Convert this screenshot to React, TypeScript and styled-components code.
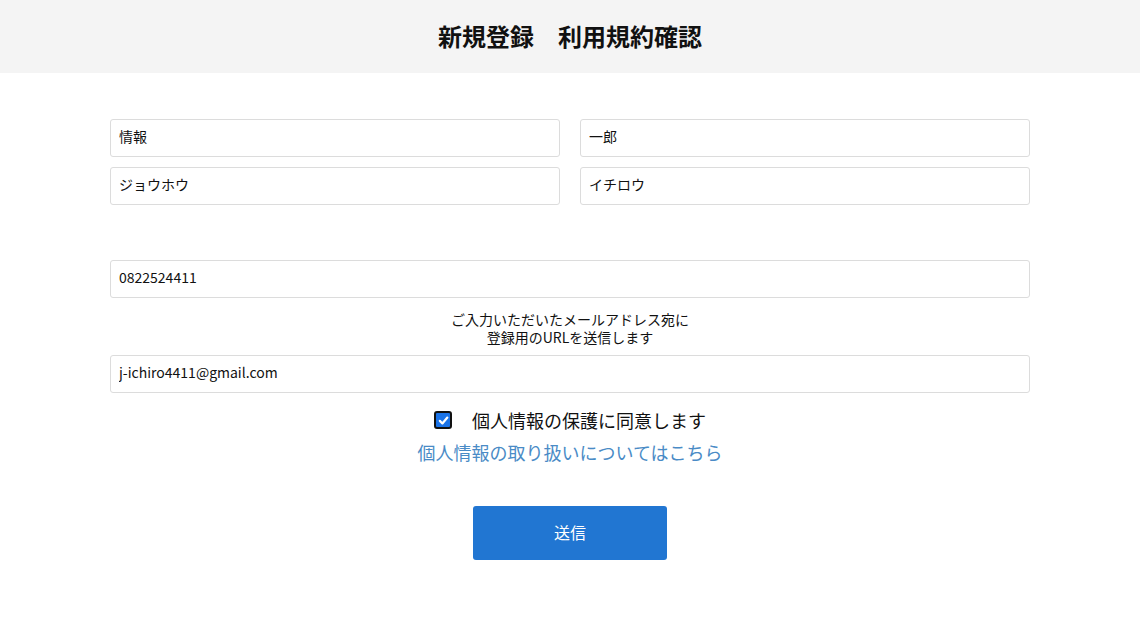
import React from "react";
import styled, { createGlobalStyle } from "styled-components";

const Global = createGlobalStyle`
  * { box-sizing: border-box; }
  html, body { margin: 0; padding: 0; background: #fff; }
  body {
    font-family: "Noto Sans CJK JP", "Noto Sans", sans-serif;
    color: #111;
  }
`;

const Header = styled.header`
  height: 73px;
  background: #f4f4f4;
  display: flex;
  align-items: center;
  justify-content: center;
`;

const Title = styled.h1`
  margin: 0 0 2px;
  font-size: 24px;
  font-weight: 700;
  line-height: 30px;
  color: #111;
  white-space: pre;
`;

const Form = styled.form`
  width: 920px;
  margin: 0 auto;
  padding-top: 46px;
  display: flex;
  flex-direction: column;
  align-items: stretch;
`;

const NameGrid = styled.div`
  display: grid;
  grid-template-columns: 1fr 1fr;
  column-gap: 20px;
  row-gap: 10px;
`;

const Field = styled.input<{ $mt?: number }>`
  display: block;
  width: 100%;
  height: 38px;
  margin: ${(p) => p.$mt ?? 0}px 0 0;
  padding: 0 8px 4px;
  border: 1px solid #dcdcdc;
  border-radius: 3px;
  background: #fff;
  font-family: "Noto Sans CJK JP", "Noto Sans", sans-serif;
  font-size: 14px;
  color: #111;
  outline: none;
`;

const Note = styled.p`
  margin: 12px 0 9px;
  text-align: center;
  font-size: 14px;
  line-height: 18px;
  color: #111;
`;

const AgreeRow = styled.label`
  margin-top: 15px;
  height: 24px;
  display: flex;
  align-items: center;
  justify-content: center;
  gap: 20px;
  font-size: 18px;
  color: #111;
  cursor: pointer;
`;

const CheckBox = styled.span`
  width: 18px;
  height: 18px;
  border: 2px solid #111;
  border-radius: 3px;
  background: #1a73e8;
  display: flex;
  align-items: center;
  justify-content: center;
`;

const PolicyLink = styled.a`
  margin-top: 8px;
  height: 24px;
  line-height: 24px;
  text-align: center;
  font-size: 18px;
  color: #4a8bc6;
  text-decoration: none;
`;

const SubmitButton = styled.button`
  align-self: center;
  margin-top: 42px;
  width: 194px;
  height: 54px;
  padding: 0 0 3px;
  border: none;
  border-radius: 3px;
  background: #2176d2;
  color: #fff;
  font-family: "Noto Sans CJK JP", "Noto Sans", sans-serif;
  font-size: 16px;
  cursor: pointer;
`;

export default function App() {
  return (
    <>
      <Global />
      <Header>
        <Title>新規登録　利用規約確認</Title>
      </Header>
      <Form onSubmit={(e) => e.preventDefault()}>
        <NameGrid>
          <Field defaultValue="情報" />
          <Field defaultValue="一郎" />
          <Field defaultValue="ジョウホウ" />
          <Field defaultValue="イチロウ" />
        </NameGrid>
        <Field $mt={55} defaultValue="0822524411" />
        <Note>
          ご入力いただいたメールアドレス宛に
          <br />
          登録用のURLを送信します
        </Note>
        <Field defaultValue="j-ichiro4411@gmail.com" />
        <AgreeRow>
          <CheckBox role="checkbox" aria-checked="true">
            <svg width="11" height="11" viewBox="0 0 12 12">
              <path d="M2 6.4 L4.8 9.2 L10.2 2.8" fill="none" stroke="#fff" strokeWidth="2.4" strokeLinecap="round" strokeLinejoin="round" />
            </svg>
          </CheckBox>
          個人情報の保護に同意します
        </AgreeRow>
        <PolicyLink href="#">個人情報の取り扱いについてはこちら</PolicyLink>
        <SubmitButton type="submit">送信</SubmitButton>
      </Form>
    </>
  );
}
